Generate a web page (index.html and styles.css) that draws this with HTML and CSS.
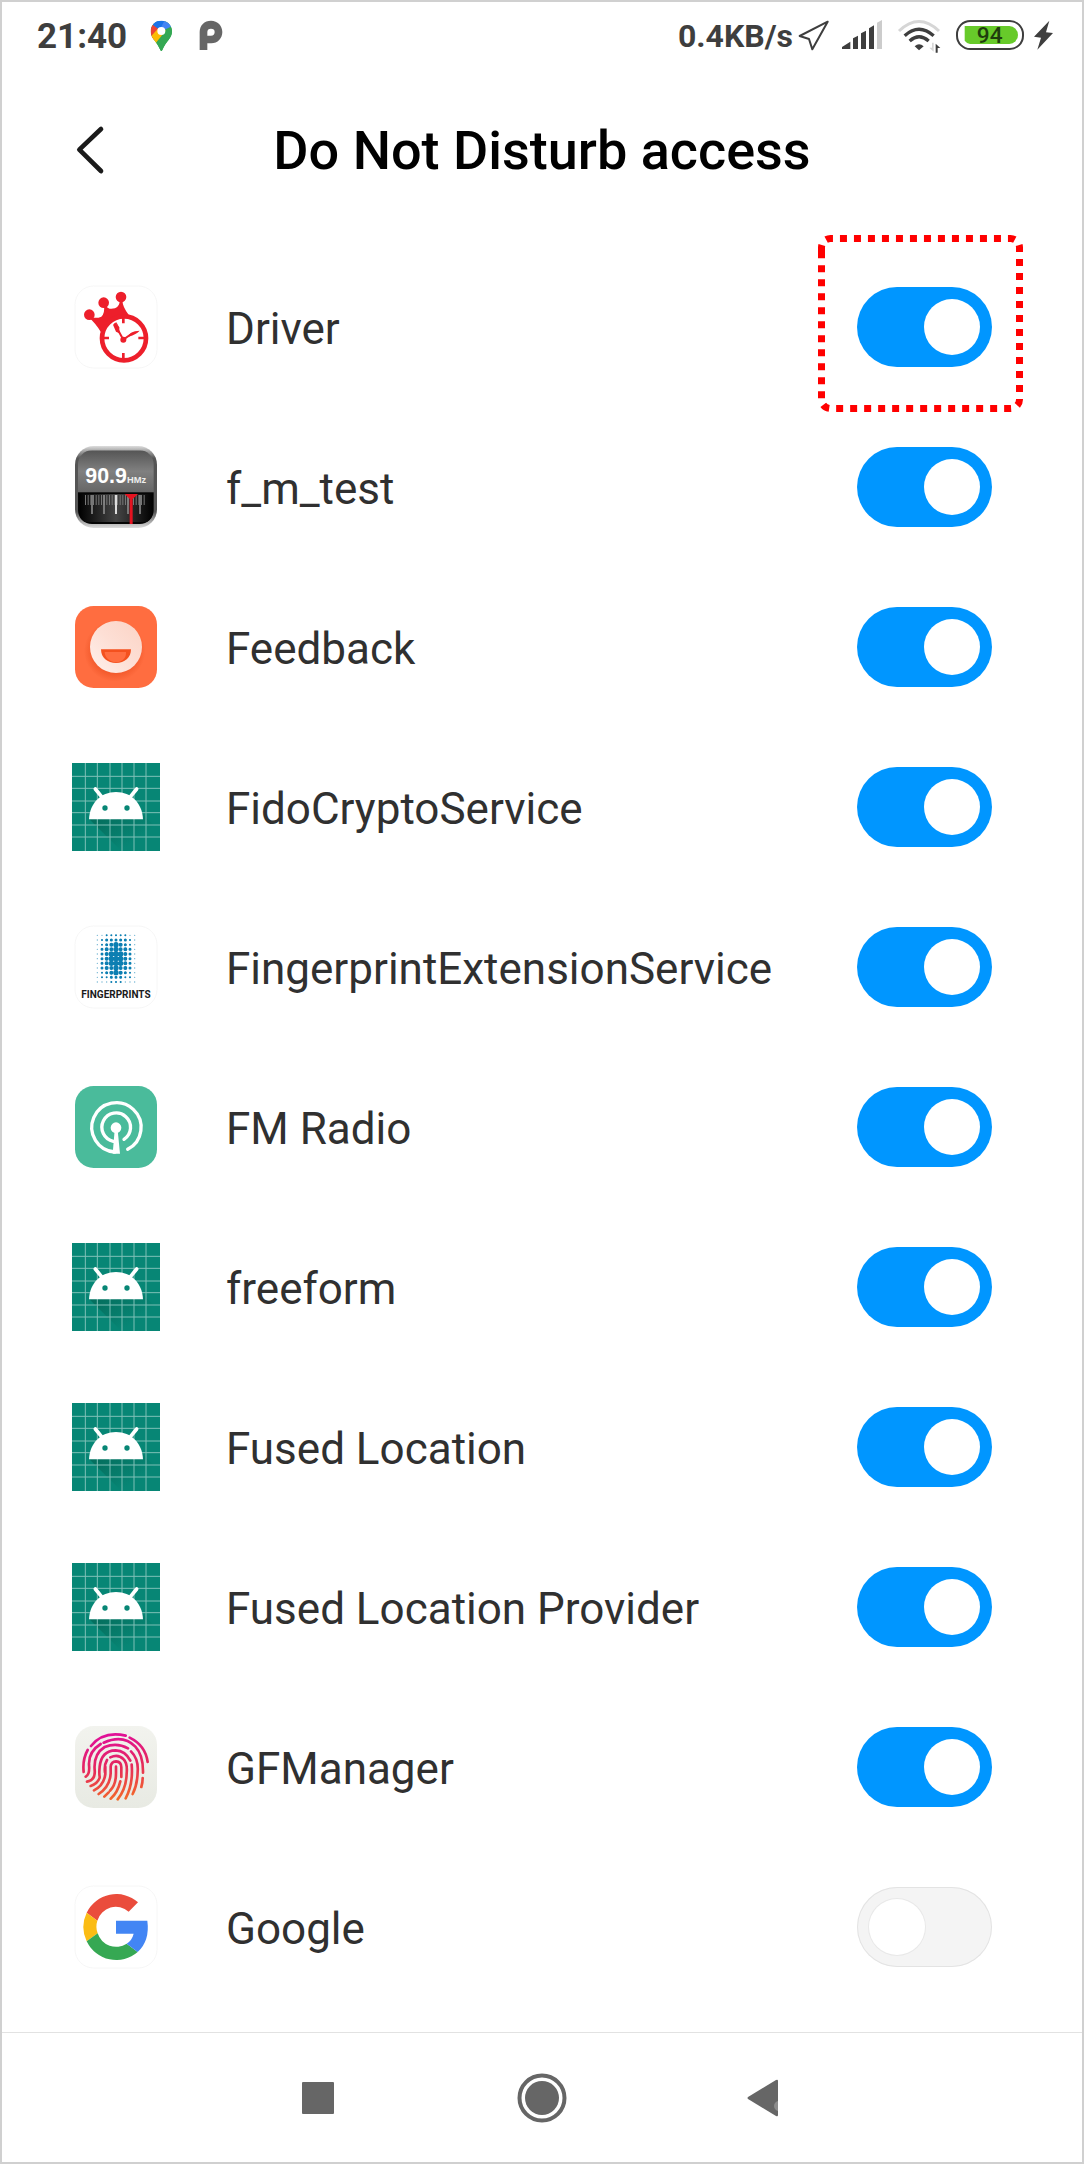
FILE: index.html
```html
<!DOCTYPE html>
<html lang="en">
<head>
<meta charset="utf-8">
<meta name="viewport" content="width=device-width, initial-scale=1">
<title>Do Not Disturb access</title>
<link rel="stylesheet" href="styles.css">
</head>
<body>
<svg class="defs" aria-hidden="true">
  <defs><linearGradient id="shade" gradientUnits="userSpaceOnUse" x1="150" y1="190" x2="215" y2="280"><stop stop-color="#05705f"/><stop offset="1" stop-color="#078675"/></linearGradient></defs>
  <symbol id="android" viewBox="36 39 264 264">
    <rect x="36" y="39" width="264" height="264" fill="#078675"/>
    <path d="M88 208L184 303H300V244L232 176L170 208Z" fill="url(#shade)"/>
    <path d="M76 39V303M112 39V303M150 39V303M186 39V303M222 39V303M258 39V303M36 79H300M36 115H300M36 153H300M36 188H300M36 225H300M36 261H300" stroke="#7fc0b7" stroke-width="3" fill="none"/>
    <path d="M106 117L124 139M230 117L212 139" stroke="#fff" stroke-width="11" stroke-linecap="round"/>
    <path d="M87 208C89 160 122 126 168 126S247 160 249 208Z" fill="#fff"/>
    <circle cx="135" cy="174" r="8" fill="#078675"/><circle cx="201" cy="174" r="8" fill="#078675"/>
  </symbol>
</svg>
<div class="screen">
  <div class="status">
    <div class="status-left">
      <span class="time">21:40</span>
      <svg width="29" height="34" viewBox="438 57 87 102" aria-hidden="true">
        <clipPath id="pin"><path d="M481 62C500 62 513 76 513 94C513 115 495 124 484 150Q481 156 478 150C467 124 449 115 449 94C449 76 462 62 481 62Z"/></clipPath>
        <g clip-path="url(#pin)">
          <path d="M440 57H520V160H440Z" fill="#34a853"/>
          <path d="M440 57H520V75L481 94Z" fill="#4285f4"/>
          <path d="M455 75L470 57H493L474 94Z" fill="#1a73e8"/>
          <path d="M440 66L456 75L481 94L440 138Z" fill="#ea4335"/>
          <path d="M448 111L472 85L500 94L462 136Z" fill="#fbbc04"/>
          <path d="M465 128L495 91L520 78V160H470Z" fill="#34a853"/>
        </g>
        <circle cx="481" cy="93" r="12" fill="#fff"/>
      </svg>
      <svg width="28" height="34" viewBox="585 57 84 102" aria-hidden="true">
        <path d="M596 150V96C596 76 610 62 630 62S664 77 664 96S650 130 631 130H619V150ZM630 86Q619 86 619 96V107H630C637 107 641 103 641 96S637 86 630 86Z" fill="#666" fill-rule="evenodd"/>
      </svg>
    </div>
    <div class="status-right">
      <span class="speed">0.4KB/s</span>
      <svg class="spill" width="28" height="34" viewBox="429 57 84 102" aria-hidden="true"><path d="M503 65L419 108L447 117L457 148Z" fill="none" stroke="#3e3e3e" stroke-width="6" stroke-linejoin="round"/></svg>
      <svg width="46" height="34" viewBox="543 57 138 102" aria-hidden="true"><path d="M546 147V141L571 125V147ZM579 147V115L594 107V147ZM603 147V100L618 92V147ZM627 147V85L642 76V147Z" fill="#3e3e3e"/><path d="M651 147V68L666 60V147Z" fill="#ccc"/></svg>
      <svg width="49" height="34" viewBox="711 57 147 102" aria-hidden="true">
        <path d="M717 93Q777 36 837 93" fill="none" stroke="#d6d6d6" stroke-width="9"/>
        <path d="M734 107Q777 68 821 107M749 123Q777 98 806 123" fill="none" stroke="#3e3e3e" stroke-width="10"/>
        <path d="M764 139Q777 126 791 139L777 151Z" fill="#3e3e3e"/>
        <path d="M821 128V155L808 143H816V128Z" fill="#d6d6d6"/><path d="M827 158V131L841 144H833V158Z" fill="#3e3e3e"/>
      </svg>
      <svg width="68" height="34" viewBox="888 57 204 102" role="img" aria-label="Battery 94">
        <rect x="891" y="63" width="198" height="84" rx="40" fill="#fff" stroke="#3e3e3e" stroke-width="6"/>
        <path d="M914 78H1048A26 27 0 0 1 1048 132H930Q920 130 914 122Z" fill="#67ca2a"/>
        <text x="989" y="130" class="battery-text">94</text>
      </svg>
      <svg width="20" height="34" viewBox="1122 57 60 102" aria-hidden="true"><path d="M1168 62L1122 110L1143 113L1132 149L1179 99L1158 97Z" fill="#3e3e3e"/></svg>
    </div>
  </div>

  <header class="header">
    <button class="back" type="button" aria-label="Back">
      <svg width="32" height="52" viewBox="228 369 96 156" aria-hidden="true"><path d="M303 381L238 443L303 507" fill="none" stroke="#1b1b1b" stroke-width="14" stroke-linecap="round" stroke-linejoin="round"/></svg>
    </button>
    <h1 class="title">Do Not Disturb access</h1>
  </header>

  <main class="list">
    <div class="row">
      <svg class="icon" viewBox="36 39 264 264" aria-hidden="true">
        <rect x="45" y="48" width="246" height="246" rx="56" fill="#fff" stroke="#f1f1f1" stroke-width="2"/>
        <g fill="#ed1f2b"><circle cx="88" cy="134" r="16"/><circle cx="131" cy="98" r="16"/><circle cx="183" cy="81" r="16"/>
        <path d="M86 142Q112 146 124 140Q135 130 132 108H139Q144 120 165 115Q180 108 179 90H187Q188 112 206 134L124 188Q105 158 86 142Z"/></g>
        <circle cx="192" cy="205" r="66" fill="#fff" stroke="#ed1f2b" stroke-width="14"/>
        <path d="M190 142V160M190 249V268M128 204H147M235 204H256" stroke="#ed1f2b" stroke-width="8"/>
        <path d="M190 209L172 176M190 209L214 192" stroke="#ed1f2b" stroke-width="6"/>
        <path d="M206 200Q207 183 239 182Q230 193 206 200ZM159 164L167 158L178 173V190L168 185Z" fill="#ed1f2b"/>
        <path d="M163 160L172 178M168 157L177 174" stroke="#ed1f2b" stroke-width="3"/>
        <circle cx="190" cy="209" r="9" fill="#ed1f2b"/>
      </svg>
      <label class="name" for="s1">Driver</label>
      <span class="control">
        <input class="switch" type="checkbox" role="switch" id="s1" checked>
        <svg class="highlight" viewBox="0 0 205 177" aria-hidden="true"><path d="M3.500 17V12.500A9 9 0 0 1 12.500 3.500H192.500A9 9 0 0 1 201.500 12.500V164.500A9 9 0 0 1 192.500 173.500H12.500A9 9 0 0 1 3.500 164.500V17"/></svg>
      </span>
    </div>
    <div class="row">
      <svg class="icon" viewBox="36 39 264 264" aria-hidden="true">
        <defs>
          <linearGradient id="metal" x2="0" y2="1"><stop stop-color="#555"/><stop offset=".5" stop-color="#808080"/><stop offset="1" stop-color="#666"/></linearGradient>
          <linearGradient id="rim" x2="0" y2="1"><stop stop-color="#ddd"/><stop offset=".15" stop-color="#555"/><stop offset=".8" stop-color="#555"/><stop offset="1" stop-color="#ddd"/></linearGradient>
          <linearGradient id="dial"><stop stop-color="#000"/><stop offset=".5" stop-color="#555"/><stop offset="1" stop-color="#000"/></linearGradient>
          <clipPath id="fm"><rect x="54" y="61" width="227" height="221" rx="42"/></clipPath>
        </defs>
        <rect x="45" y="48" width="246" height="246" rx="56" fill="url(#rim)"/>
        <g clip-path="url(#fm)">
          <rect x="50" y="61" width="236" height="126" fill="url(#metal)"/>
          <rect x="50" y="187" width="236" height="96" fill="#050505"/>
          <rect x="58" y="192" width="220" height="84" fill="url(#dial)" opacity=".8"/>
          <path d="M75 210H258" stroke="#777" stroke-width="30" stroke-dasharray="3 5"/>
          <path d="M96 195V252M132 195V252M204 195V252M240 195V252" stroke="#888" stroke-width="5"/><path d="M168 195V252" stroke="#ddd" stroke-width="6"/>
          <path d="M194 192H234L218 207V282H209V207Z" fill="#e51320"/>
        </g>
        <text x="76" y="159" class="fm-number">90.9</text><text x="201" y="159" class="fm-unit">HMz</text>
      </svg>
      <label class="name" for="s2">f_m_test</label>
      <span class="control"><input class="switch" type="checkbox" role="switch" id="s2" checked></span>
    </div>
    <div class="row">
      <svg class="icon" viewBox="36 39 264 264" aria-hidden="true">
        <defs>
          <linearGradient id="face" x1="1" x2="0" y2="1"><stop stop-color="#fbd3c5"/><stop offset=".5" stop-color="#fddfd5"/><stop offset="1" stop-color="#fff1ec"/></linearGradient>
          <radialGradient id="glow"><stop offset=".7" stop-color="#f2592b"/><stop offset="1" stop-color="#ff6d40"/></radialGradient>
        </defs>
        <rect x="45" y="48" width="246" height="246" rx="56" fill="#ff6d40"/>
        <circle cx="164" cy="183" r="92" fill="url(#glow)"/>
        <circle cx="168" cy="171" r="78" fill="url(#face)"/>
        <path d="M123 178H213C213 203 194 219 168 219S123 203 123 178Z" fill="#f4511e"/><path d="M134 186H198C199 203 190 215 168 217C148 215 134 202 134 186Z" fill="#ff6d40"/>
      </svg>
      <label class="name" for="s3">Feedback</label>
      <span class="control"><input class="switch" type="checkbox" role="switch" id="s3" checked></span>
    </div>
    <div class="row">
      <svg class="icon" aria-hidden="true"><use href="#android"/></svg>
      <label class="name" for="s4">FidoCryptoService</label>
      <span class="control"><input class="switch" type="checkbox" role="switch" id="s4" checked></span>
    </div>
    <div class="row">
      <svg class="icon" viewBox="36 39 264 264" aria-hidden="true">
        <rect x="45" y="48" width="246" height="246" rx="56" fill="#fff" stroke="#f1f1f1" stroke-width="2"/>
        <g fill="none" stroke="#0c7fb2" stroke-linecap="round" stroke-dasharray="0 14">
          <path stroke-width="4" opacity=".6" d="M112 76H225M112 90H225M112 104H225M112 118H225M112 132H225M112 146H225M112 160H225M112 174H225M112 188H225M112 202H225M112 216H225"/>
          <path stroke-width="6" d="M140 76H197M126 90H211M126 104H211M126 118H211M126 132H211M126 146H211M126 160H211M126 174H211M126 188H211M126 202H211M154 216H183"/>
          <path stroke-width="9" d="M140 90H197M140 104H197M126 118H211M126 132H211M126 146H211M126 160H211M126 174H211M140 188H197M154 202H183"/>
          <path stroke-width="12" d="M154 104H183M140 118H197M140 132H197M140 146H197M140 160H197M140 174H197M154 188H183"/>
          <path stroke-width="16" d="M168 104H169M168 118H169M154 132H183M154 146H183M154 160H183M168 174H169M168 188H169"/>
        </g>
        <text x="168" y="264" class="fp-text">FINGERPRINTS</text>
      </svg>
      <label class="name" for="s5">FingerprintExtensionService</label>
      <span class="control"><input class="switch" type="checkbox" role="switch" id="s5" checked></span>
    </div>
    <div class="row">
      <svg class="icon" viewBox="36 39 264 264" aria-hidden="true">
        <rect x="45" y="48" width="246" height="246" rx="56" fill="#4abb9b"/>
        <path d="M203 238A74 74 0 1 0 165 246M192 208A43 43 0 1 0 160 214" fill="none" stroke="#fff" stroke-width="10" stroke-linecap="round"/>
        <circle cx="168" cy="173" r="16" fill="#fff"/><path d="M164 180H173L180 251H158Z" fill="#fff"/>
      </svg>
      <label class="name" for="s6">FM Radio</label>
      <span class="control"><input class="switch" type="checkbox" role="switch" id="s6" checked></span>
    </div>
    <div class="row">
      <svg class="icon" aria-hidden="true"><use href="#android"/></svg>
      <label class="name" for="s7">freeform</label>
      <span class="control"><input class="switch" type="checkbox" role="switch" id="s7" checked></span>
    </div>
    <div class="row">
      <svg class="icon" aria-hidden="true"><use href="#android"/></svg>
      <label class="name" for="s8">Fused Location</label>
      <span class="control"><input class="switch" type="checkbox" role="switch" id="s8" checked></span>
    </div>
    <div class="row">
      <svg class="icon" aria-hidden="true"><use href="#android"/></svg>
      <label class="name" for="s9">Fused Location Provider</label>
      <span class="control"><input class="switch" type="checkbox" role="switch" id="s9" checked></span>
    </div>
    <div class="row">
      <svg class="icon" viewBox="36 39 264 264" aria-hidden="true">
        <defs>
          <linearGradient id="print" gradientUnits="userSpaceOnUse" x1="150" y1="70" x2="180" y2="270"><stop stop-color="#e0109a"/><stop offset=".5" stop-color="#e5285c"/><stop offset="1" stop-color="#f36a28"/></linearGradient>
          <linearGradient id="plate" x2="0" y2="1"><stop stop-color="#f2f3ee"/><stop offset="1" stop-color="#e8eae3"/></linearGradient>
        </defs>
        <rect x="45" y="48" width="246" height="246" rx="56" fill="url(#plate)"/>
        <path fill="none" stroke="url(#print)" stroke-width="8" stroke-linecap="round" d="M93 108Q130 62 197 77M209 83Q256 106 263 156M83 120Q67 148 71 186M122 102Q85 125 87 165Q90 194 77 200M131 98Q190 72 226 110Q250 135 249 188M248 204Q248 218 244 231M81 215Q107 210 104 180Q100 132 134 111Q170 96 204 115M213 124Q236 147 233 185Q232 225 218 252M92 228Q113 221 119 203M119 200Q117 190 119 170Q124 122 167 121Q196 122 211 152M215 164Q220 222 197 265M102 241Q132 226 136 192V170M135 188Q132 165 141 150M151 142Q174 131 190 147Q203 159 200 190Q199 236 173 268M116 252Q150 230 152 190V170Q154 154 168 154Q184 155 184 172V201M181 214Q173 248 152 266M168 170V190Q168 225 150 242M146 247L133 260"/>
      </svg>
      <label class="name" for="s10">GFManager</label>
      <span class="control"><input class="switch" type="checkbox" role="switch" id="s10" checked></span>
    </div>
    <div class="row">
      <svg class="icon" viewBox="36 39 264 264" aria-hidden="true">
        <rect x="45" y="48" width="246" height="246" rx="56" fill="#fff" stroke="#f1f1f1" stroke-width="2"/>
        <path d="M80 128A99 100 0 0 1 234 97L206 125A58 58 0 0 0 112 152Z" fill="#ea4c3c"/>
        <path d="M80 128A99 100 0 0 0 80 214L113 190A58 58 0 0 1 112 152Z" fill="#fbbc14"/>
        <path d="M80 214A99 100 0 0 0 233 246L200 221A58 58 0 0 1 113 190Z" fill="#36a853"/>
        <path d="M168 152H262Q270 212 233 246L200 221Q216 211 221 191H168Z" fill="#4285f4"/>
      </svg>
      <label class="name" for="s11">Google</label>
      <span class="control"><input class="switch" type="checkbox" role="switch" id="s11"></span>
    </div>
  </main>

  <nav class="nav">
    <button class="nav-button" type="button" aria-label="Recent apps"><svg width="50" height="50" viewBox="0 0 50 50"><rect x="9" y="9" width="32" height="32" rx="1" fill="#666"/></svg></button>
    <button class="nav-button" type="button" aria-label="Home"><svg width="50" height="50" viewBox="0 0 50 50"><circle cx="25" cy="25" r="22.500" fill="none" stroke="#666" stroke-width="4"/><circle cx="25" cy="25" r="17" fill="#666"/></svg></button>
    <button class="nav-button" type="button" aria-label="Back"><svg width="50" height="50" viewBox="3 0 50 50"><clipPath id="tri"><path d="M10 24Q9 25 10 26L38 43Q40 44 40 42V8Q40 6 38 7Z"/></clipPath><g clip-path="url(#tri)"><path d="M0 0H50V50H0Z" fill="#666"/><circle cx="41" cy="33" r="5" fill="#8c8c8c"/></g></svg></button>
  </nav>
</div>
</body>
</html>
```
FILE: styles.css
```css
* { box-sizing: border-box; }

body {
  margin: 0;
  background: #fff;
  font-family: Roboto, "Liberation Sans", sans-serif;
}

svg { display: block; flex: none; }

button {
  padding: 0;
  border: 0;
  background: none;
  cursor: pointer;
}

.defs { position: absolute; width: 0; height: 0; }

.spill { overflow: visible; }

.screen {
  display: flex;
  flex-direction: column;
  min-height: 100vh;
  border: 2px solid #d0d0d0;
}

.status {
  display: flex;
  justify-content: space-between;
  align-items: center;
  height: 68px;
  padding: 0 28px 0 35px;
  color: #3e3e3e;
}

.status-left { display: flex; align-items: center; gap: 20px; }
.status-right { display: flex; align-items: center; gap: 10px; }
.time { font-size: 35px; font-weight: 700; }
.speed { font-size: 32px; font-weight: 700; }

.battery-text {
  font-size: 68px;
  font-weight: 500;
  text-anchor: middle;
  fill: #1f3d0d;
}

.header {
  display: grid;
  grid-template-columns: 80px 1fr 80px;
  align-items: center;
  height: 160px;
  padding: 2px 50px 0;
}

.back { justify-self: center; }

.title {
  margin: 0;
  color: #000;
  font-size: 54px;
  font-weight: 500;
  line-height: 64px;
  text-align: center;
}

.list { flex: 1; padding: 17px 90px 24px 70px; }

.row {
  display: flex;
  align-items: center;
  gap: 66px;
  height: 160px;
}

.icon { width: 88px; height: 88px; }

.name {
  flex: 1;
  padding-top: 4px;
  color: #303030;
  font-size: 44px;
  line-height: 52px;
  white-space: nowrap;
}

.control { position: relative; display: flex; }

.switch {
  appearance: none;
  display: flex;
  align-items: center;
  width: 135px;
  height: 80px;
  margin: 0;
  padding: 0 12px;
  border-radius: 40px;
  background: #f4f4f4;
  box-shadow: inset 0 0 0 1px #e3e3e3;
  cursor: pointer;
}

.switch::before {
  content: "";
  width: 56px;
  height: 56px;
  border-radius: 50%;
  background: #fff;
  box-shadow: 0 0 0 1px #e8e8e8;
}

.switch:checked {
  justify-content: flex-end;
  background: #0096ff;
  box-shadow: none;
}

.switch:checked::before { box-shadow: none; }

.highlight {
  position: absolute;
  top: -52px;
  left: -39px;
  width: 205px;
  height: 177px;
  pointer-events: none;
}

.highlight path {
  fill: none;
  stroke: #f00;
  stroke-width: 7px;
  stroke-dasharray: 7px 7px;
}

.fm-number {
  fill: #fff;
  font: 700 64px "Liberation Sans", sans-serif;
}

.fm-unit {
  fill: #eee;
  font: 700 28px "Liberation Sans", sans-serif;
}

.fp-text {
  fill: #1a1a1a;
  font-size: 30px;
  font-weight: 700;
  text-anchor: middle;
}

.nav {
  display: flex;
  justify-content: center;
  align-items: center;
  gap: 174px;
  height: 130px;
  border-top: 1px solid #e2e2e2;
}
```
